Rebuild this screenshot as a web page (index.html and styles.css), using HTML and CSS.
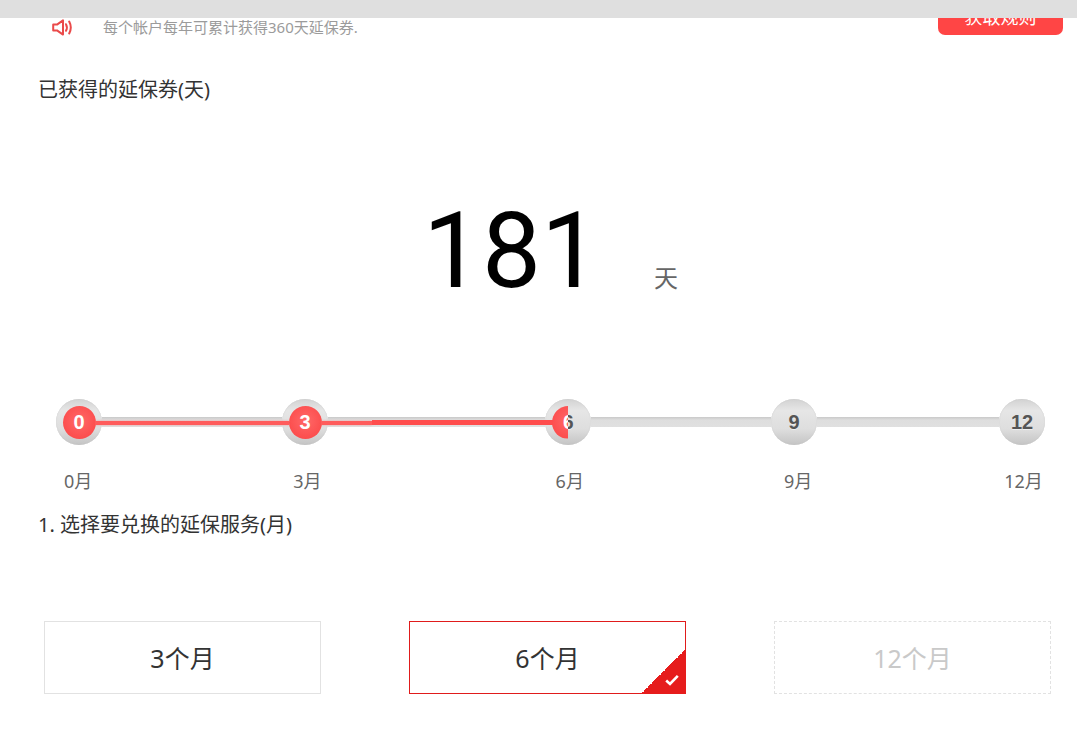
FILE: index.html
```html
<!DOCTYPE html>
<html lang="zh-CN">
<head>
<meta charset="utf-8">
<title>延保券</title>
<link rel="stylesheet" href="styles.css">
</head>
<body>
<div class="topbar"></div>
<main class="page">
  <section class="notice">
    <svg class="speaker" viewBox="0 0 21 17" width="21" height="17" aria-hidden="true">
      <path d="M1.2 5.6H5L11 1.4V15.6L5 11.4H1.2Z" fill="none" stroke="#ea4a4a" stroke-width="2" stroke-linejoin="round"/>
      <path d="M14 5.2Q15.8 8.5 14 11.8" fill="none" stroke="#ea4a4a" stroke-width="2" stroke-linecap="round"/>
      <path d="M17.2 2.6Q20.4 8.5 17.2 14.4" fill="none" stroke="#ea4a4a" stroke-width="2" stroke-linecap="round"/>
    </svg>
    <p class="notice-text">每个帐户每年可累计获得360天延保券.</p>
    <button class="rules-btn" type="button">获取规则</button>
  </section>

  <h2 class="heading">已获得的延保券(天)</h2>

  <section class="hero">
    <span class="hero-num">181</span>
    <span class="hero-unit">天</span>
  </section>

  <section class="slider">
    <span class="knob knob-on"><span class="dot"><b>0</b></span></span>
    <span class="seg seg-a"><i class="fill"></i></span>
    <span class="knob knob-on"><span class="dot"><b>3</b></span></span>
    <span class="seg seg-b"><i class="fill fill-start"></i><i class="fill fill-strong"></i></span>
    <span class="knob"><b>6</b><span class="dot dot-half"><b>6</b></span></span>
    <span class="seg seg-a"></span>
    <span class="knob"><b>9</b></span>
    <span class="seg seg-d"></span>
    <span class="knob"><b>12</b></span>
  </section>

  <section class="labels">
    <span class="label">0月</span>
    <span class="label l3">3月</span>
    <span class="label l6">6月</span>
    <span class="label l9">9月</span>
    <span class="label l12">12月</span>
  </section>

  <h2 class="heading heading-second">1. 选择要兑换的延保服务(月)</h2>

  <section class="options">
    <div class="option">3个月</div>
    <div class="option option-active">6个月
      <span class="corner">
        <svg viewBox="0 0 14 12" width="14" height="12" aria-hidden="true">
          <path d="M1.2 6.5L5 10L12.8 1.8" fill="none" stroke="#fff" stroke-width="2.6"/>
        </svg>
      </span>
    </div>
    <div class="option option-disabled">12个月</div>
  </section>
</main>
</body>
</html>
```

FILE: styles.css
```css
* { box-sizing: border-box; }

html, body {
  margin: 0;
  padding: 0;
  background: #fff;
}

body {
  font-family: "Noto Sans", "Noto Sans CJK SC", sans-serif;
  color: #333;
  overflow: hidden;
  height: 745px;
}

.topbar {
  position: fixed;
  top: 0;
  left: 0;
  right: 0;
  height: 18px;
  background: #dfdfdf;
  z-index: 10;
}

.notice {
  display: flex;
  align-items: flex-start;
  height: 35px;
  padding-left: 52px;
  padding-right: 14px;
}

.speaker {
  margin-top: 19px;
  flex: none;
}

.notice-text {
  margin: 17px 0 0 30px;
  font-size: 15px;
  line-height: 20px;
  color: #9b9b9b;
}

.rules-btn {
  margin-left: auto;
  width: 125px;
  height: 35px;
  border: 0;
  border-radius: 0 0 7px 7px;
  background: #ff4545;
  color: #fff;
  font: inherit;
  font-size: 18px;
  line-height: 24px;
  padding: 0 0 2px;
}

.heading {
  margin: 43px 0 0 38px;
  font-size: 20px;
  font-weight: 400;
  line-height: 24px;
  color: #333;
}

.heading-second {
  margin-top: 20px;
}

.hero {
  display: flex;
  align-items: baseline;
  height: 297px;
  padding: 85px 0 0 423px;
}

.hero-num {
  font-family: Roboto, sans-serif;
  font-size: 105px;
  font-weight: 400;
  line-height: 130px;
  color: #000;
}

.hero-unit {
  margin-left: 54px;
  font-size: 24px;
  line-height: 30px;
  color: #666;
}

.slider {
  display: flex;
  align-items: center;
  height: 46px;
  padding-left: 56px;
}

.knob {
  position: relative;
  flex: none;
  width: 46px;
  height: 46px;
  border-radius: 50%;
  display: flex;
  align-items: center;
  justify-content: center;
  background: linear-gradient(#d2d2d2, #e6e6e6 25%, #dedede 65%, #c4c4c4);
  box-shadow: inset 0 0 1px #bbb;
}

.knob b {
  font-family: "Liberation Sans", sans-serif;
  font-size: 20px;
  line-height: 1;
  color: #555;
  text-shadow: 0 1px 0 #eee;
}

.dot {
  flex: none;
  width: 33px;
  height: 33px;
  border-radius: 50%;
  display: flex;
  align-items: center;
  justify-content: center;
  background: radial-gradient(circle at 50% 45%, #ff6868, #fb4343);
}

.dot b {
  color: #fff;
  text-shadow: none;
}

.dot-half {
  position: absolute;
  left: 7px;
  top: 6.5px;
  clip-path: inset(0 17px 0 0);
}

.seg {
  position: relative;
  z-index: 2;
  flex: none;
  height: 10px;
  margin-top: -1px;
  background: linear-gradient(#c9c9c9, #dedede 30%, #e0e0e0);
}

.seg-a { width: 180px; }
.seg-b { width: 217px; }
.seg-d { width: 182px; }

.fill {
  position: absolute;
  left: -7px;
  right: -7px;
  top: 4px;
  height: 4px;
  background: #ff5c5c;
  box-shadow: 0 0 2px rgba(255, 90, 90, 0.6);
}

.fill-start {
  right: auto;
  width: 51px;
}

.fill-strong {
  left: 44px;
  right: -8px;
  top: 3px;
  height: 5px;
  background: #ff4d4d;
  box-shadow: none;
}

.labels {
  display: flex;
  margin-top: 24px;
  padding-left: 64px;
}

.label {
  font-size: 18px;
  line-height: 24px;
  color: #666;
}

.l3 { margin-left: 201px; }
.l6 { margin-left: 234px; }
.l9 { margin-left: 200px; }
.l12 { margin-left: 192px; }

.options {
  display: flex;
  gap: 88px;
  margin-top: 84px;
  padding-left: 44px;
}

.option {
  position: relative;
  flex: none;
  width: 277px;
  height: 73px;
  border: 1px solid #e2e2e2;
  display: flex;
  align-items: center;
  justify-content: center;
  padding-bottom: 2px;
  font-size: 25px;
  color: #333;
}

.option-active {
  border-color: #e01b1b;
}

.option-disabled {
  border-style: dashed;
  color: #c9c9c9;
}

.corner {
  position: absolute;
  right: -1px;
  bottom: -1px;
  width: 45px;
  height: 45px;
  background: linear-gradient(135deg, transparent 50%, #e61c1c 50%);
}

.corner svg {
  position: absolute;
  right: 7px;
  bottom: 8px;
}
```
